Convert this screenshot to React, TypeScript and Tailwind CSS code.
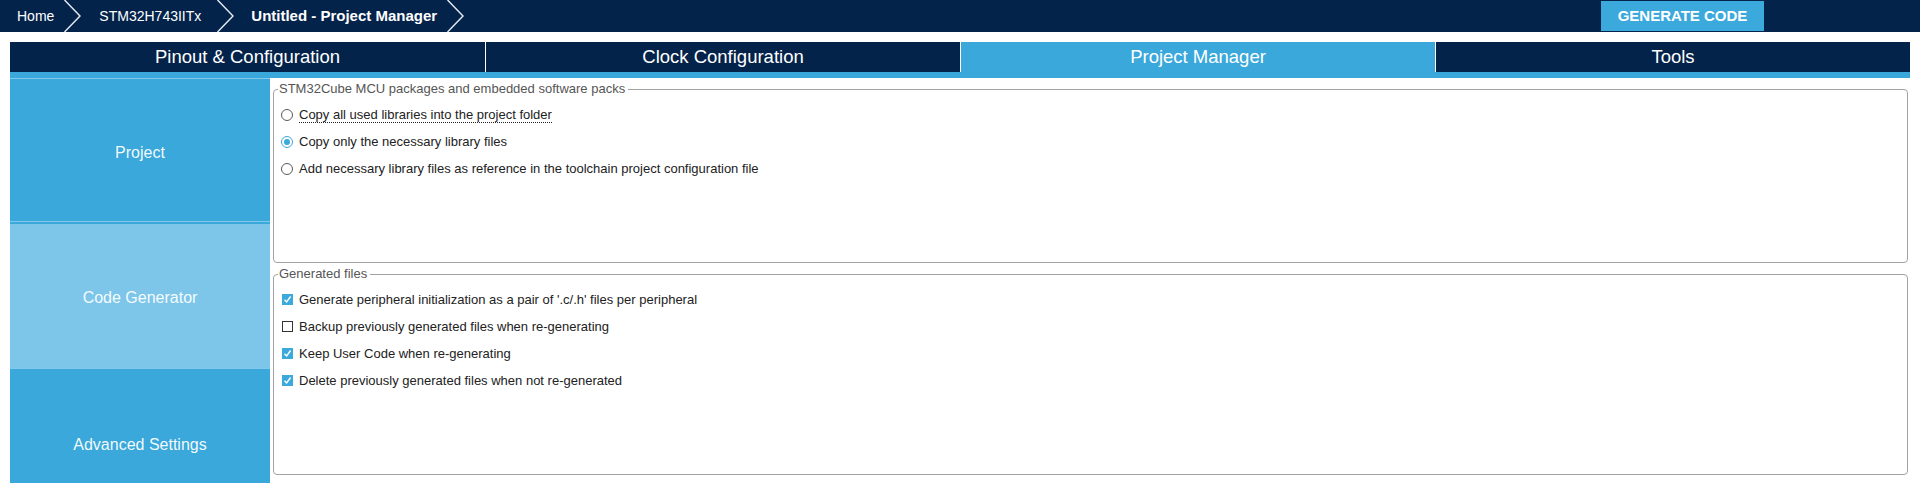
import React from 'react'

function Chevron() {
  return (
    <svg width="17" height="32" viewBox="0 0 17 32" className="shrink-0">
      <polyline points="0.5,0 16,16 0.5,32" fill="none" stroke="#e4e8ee" strokeWidth="1.5" />
    </svg>
  )
}

function Radio({ checked }: { checked?: boolean }) {
  return (
    <span
      className={`flex h-[12px] w-[12px] shrink-0 items-center justify-center rounded-full border bg-white ${
        checked ? 'border-[#3ba9dc]' : 'border-[#5a5a5a]'
      }`}
    >
      {checked && <span className="h-[6px] w-[6px] rounded-full bg-[#3ba9dc]" />}
    </span>
  )
}

function Checkbox({ checked }: { checked?: boolean }) {
  if (!checked) {
    return <span className="h-[11px] w-[11px] shrink-0 border border-[#333] bg-white" />
  }
  return (
    <span className="flex h-[11px] w-[11px] shrink-0 items-center justify-center bg-[#3ba9dc]">
      <svg width="9" height="9" viewBox="0 0 9 9">
        <polyline points="1.5,4.8 3.6,7 7.6,1.5" fill="none" stroke="#fff" strokeWidth="1.4" />
      </svg>
    </span>
  )
}

function SideItem({ label, light, height }: { label: string; light?: boolean; height: string }) {
  return (
    <div className={`flex flex-col border-t border-[#80c9ec] bg-[#3aa8db] pt-[2px] ${height}`}>
      <div
        className={`flex flex-1 items-center justify-center pt-[3px] text-[16px] text-white/95 ${
          light ? 'bg-[#7dc6ea]' : 'bg-[#3aa8db]'
        }`}
      >
        {label}
      </div>
    </div>
  )
}

const packOptions = [
  { label: 'Copy all used libraries into the project folder', checked: false, focus: true },
  { label: 'Copy only the necessary library files', checked: true },
  { label: 'Add necessary library files as reference in the toolchain project configuration file', checked: false },
]

const fileOptions = [
  { label: "Generate peripheral initialization as a pair of '.c/.h' files per peripheral", checked: true },
  { label: 'Backup previously generated files when re-generating', checked: false },
  { label: 'Keep User Code when re-generating', checked: true },
  { label: 'Delete previously generated files when not re-generated', checked: true },
]

export default function App() {
  const tabs = ['Pinout & Configuration', 'Clock Configuration', 'Project Manager', 'Tools']

  return (
    <div className="h-[483px] overflow-hidden bg-white font-['Liberation_Sans',Arial,sans-serif]">
      {/* breadcrumb bar */}
      <div className="flex h-8 items-stretch justify-between bg-[#03234b]">
        <div className="flex items-stretch pl-[17px] text-[14px] text-white">
          <span className="flex items-center pr-[10px]">Home</span>
          <Chevron />
          <span className="flex items-center pl-[18px] pr-[16px]">STM32H743IITx</span>
          <Chevron />
          <span className="flex items-center pl-[17px] pr-[10px] text-[15px] font-bold">Untitled - Project Manager</span>
          <Chevron />
        </div>
        <button className="my-px mr-[156px] w-[163px] bg-[#3ba9dc] text-[15px] font-bold text-white">GENERATE CODE</button>
      </div>

      {/* main tabs */}
      <div className="mx-[10px] mt-[10px]">
        <div className="grid h-[30px] grid-cols-4 bg-[#03234b] text-[18.5px] text-white">
          {tabs.map((t, i) => (
            <div
              key={t}
              className={`flex items-center justify-center ${i > 0 ? 'border-l border-white' : ''} ${
                t === 'Project Manager' ? 'bg-[#3aa8db]' : ''
              }`}
            >
              {t}
            </div>
          ))}
        </div>
        <div className="h-[6px] bg-[#3aa8db]" />
      </div>

      <div className="ml-[10px] mr-[12px] flex gap-[3px]">
        <div className="flex w-[260px] shrink-0 flex-col">
          <SideItem label="Project" height="h-[143px]" />
          <SideItem label="Code Generator" light height="h-[147px]" />
          <SideItem label="Advanced Settings" height="h-[147px]" />
        </div>

        <div className="flex min-w-0 flex-1 flex-col pt-[3px]">
          <fieldset className="h-[182px] rounded-[4px] border border-[#a3a3a3] pl-[4px]">
            <legend className="pl-[1px] pr-[3px] text-[13px] leading-[16px] text-[#555]">
              STM32Cube MCU packages and embedded software packs
            </legend>
            <div className="pt-[4px]">
              {packOptions.map((o) => (
                <div key={o.label} className="flex h-[27px] items-center gap-[6px] pl-[3px] text-[13px] text-[#222]">
                  <Radio checked={o.checked} />
                  <span className={o.focus ? 'border-b border-dotted border-[#222] leading-[15px]' : ''}>{o.label}</span>
                </div>
              ))}
            </div>
          </fieldset>

          <fieldset className="mt-[3px] h-[209px] rounded-[4px] border border-[#a3a3a3] pl-[4px]">
            <legend className="pl-[1px] pr-[3px] text-[13px] leading-[16px] text-[#555]">Generated files</legend>
            <div className="pt-[4px]">
              {fileOptions.map((o) => (
                <div key={o.label} className="flex h-[27px] items-center gap-[6px] pl-[4px] text-[13px] text-[#222]">
                  <Checkbox checked={o.checked} />
                  <span>{o.label}</span>
                </div>
              ))}
            </div>
          </fieldset>
        </div>
      </div>
    </div>
  )
}
